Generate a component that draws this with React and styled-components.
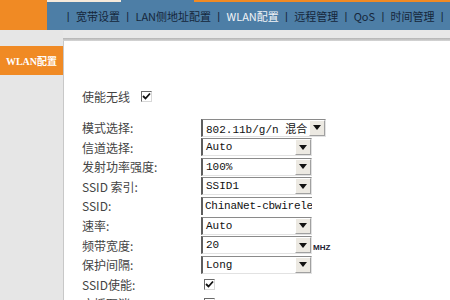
import React from 'react';
import styled, { createGlobalStyle } from 'styled-components';

const GlobalStyle = createGlobalStyle`
  html, body {
    margin: 0;
    padding: 0;
    background: #ffffff;
  }
  body {
    font-family: "Noto Sans CJK SC", "Liberation Sans", sans-serif;
  }
`;

const navItems = [
  { label: '宽带设置' },
  { label: 'LAN侧地址配置' },
  { label: 'WLAN配置', active: true },
  { label: '远程管理' },
  { label: 'QoS' },
  { label: '时间管理' },
];

const fields = [
  { label: '模式选择:', type: 'select', value: '802.11b/g/n 混合', wide: true },
  { label: '信道选择:', type: 'select', value: 'Auto' },
  { label: '发射功率强度:', type: 'select', value: '100%' },
  { label: 'SSID 索引:', type: 'select', value: 'SSID1' },
  { label: 'SSID:', type: 'text', value: 'ChinaNet-cbwireless' },
  { label: '速率:', type: 'select', value: 'Auto' },
  { label: '频带宽度:', type: 'select', value: '20', unit: 'MHZ' },
  { label: '保护间隔:', type: 'select', value: 'Long' },
  { label: 'SSID使能:', type: 'check', checked: true },
  { label: '广播取消:', type: 'check', checked: false },
];

function Check({ checked }) {
  return (
    <CheckBox>
      {checked && (
        <svg width="9" height="9" viewBox="0 0 9 9">
          <path d="M1 4 L3.5 6.5 L8 1.5" fill="none" stroke="#111" strokeWidth="1.8" />
        </svg>
      )}
    </CheckBox>
  );
}

function Select({ value, wide }) {
  return (
    <SelectBox wide={wide}>
      <SelectText>{value}</SelectText>
      <ArrowButton>
        <svg width="8" height="5" viewBox="0 0 8 5">
          <path d="M0 0 H8 L4 5 Z" fill="#111" />
        </svg>
      </ArrowButton>
    </SelectBox>
  );
}

export default function App() {
  return (
    <Page>
      <GlobalStyle />
      <Header>
        <Logo />
        <NavWrap>
          <NavStrip>
            <StripPart color="#f6eadb" width="74px" />
            <StripPart color="#4d7ea6" width="73px" />
            <StripPart color="#f08a24" />
          </NavStrip>
          <Nav>
            <Sep>|</Sep>
            {navItems.map((item) => (
              <React.Fragment key={item.label}>
                <NavItem active={item.active}>{item.label}</NavItem>
                <Sep>|</Sep>
              </React.Fragment>
            ))}
          </Nav>
        </NavWrap>
      </Header>
      <Body>
        <Sidebar>
          <SideTab>WLAN配置</SideTab>
        </Sidebar>
        <Main>
          <TopStrip />
          <Shadow />
          <Content>
            <EnableRow>
              <Label>使能无线</Label>
              <Check checked />
            </EnableRow>
            <Form>
              {fields.map((f) => (
                <React.Fragment key={f.label}>
                  <Label>{f.label}</Label>
                  <Control>
                    {f.type === 'select' && <Select value={f.value} wide={f.wide} />}
                    {f.type === 'text' && <TextInput>{f.value}</TextInput>}
                    {f.type === 'check' && <Check checked={f.checked} />}
                    {f.unit && <Unit>{f.unit}</Unit>}
                  </Control>
                </React.Fragment>
              ))}
            </Form>
          </Content>
        </Main>
      </Body>
    </Page>
  );
}

const Page = styled.div`
  width: 450px;
  height: 300px;
  overflow: hidden;
  display: flex;
  flex-direction: column;
  background: #e6e6e6;
`;

const Header = styled.div`
  display: flex;
  height: 30px;
  flex-shrink: 0;
`;

const Logo = styled.div`
  width: 63px;
  background: #f08a24;
`;

const NavWrap = styled.div`
  flex: 1;
  display: flex;
  flex-direction: column;
`;

const NavStrip = styled.div`
  display: flex;
  height: 2px;
`;

const StripPart = styled.div`
  background: ${(p) => p.color};
  width: ${(p) => p.width || 'auto'};
  flex: ${(p) => (p.width ? '0 0 auto' : '1')};
`;

const Nav = styled.div`
  flex: 1;
  display: flex;
  align-items: center;
  padding-left: 13px;
  background: #4d7ea6;
  font-size: 11px;
  color: #15263a;
  white-space: nowrap;
`;

const NavItem = styled.span`
  color: ${(p) => (p.active ? '#f2f4f7' : '#15263a')};
`;

const Sep = styled.span`
  margin: 0 6.3px;
  font-family: "Liberation Sans", sans-serif;
`;

const Body = styled.div`
  flex: 1;
  display: flex;
`;

const Sidebar = styled.div`
  width: 63px;
  flex-shrink: 0;
  padding-top: 16px;
  background: #e6e6e6;
`;

const SideTab = styled.div`
  height: 29px;
  display: flex;
  align-items: center;
  justify-content: center;
  background: #f08a24;
  color: #ffffff;
  font-size: 10px;
  font-weight: bold;
  font-family: "Liberation Serif", "Noto Sans CJK SC", serif;
`;

const Main = styled.div`
  flex: 1;
  display: flex;
  flex-direction: column;
`;

const TopStrip = styled.div`
  height: 8px;
  background: #e8e8e8;
`;

const Shadow = styled.div`
  height: 3px;
  background: linear-gradient(#b4b4b4, #d6d6d6);
`;

const Content = styled.div`
  flex: 1;
  background: #ffffff;
  border-left: 1px solid #c8c8c8;
  padding: 45px 0 0 18px;
`;

const EnableRow = styled.div`
  display: flex;
  align-items: center;
  gap: 8px;
  height: 20px;
`;

const Label = styled.span`
  font-size: 12px;
  color: #444444;
  white-space: nowrap;
`;

const Form = styled.div`
  margin-top: 12px;
  display: grid;
  grid-template-columns: 119px 1fr;
  grid-auto-rows: 19.55px;
  align-items: center;
`;

const Control = styled.div`
  display: flex;
  align-items: center;
`;

const SelectBox = styled.div`
  box-sizing: border-box;
  width: ${(p) => (p.wide ? '125px' : '111px')};
  height: 18px;
  display: flex;
  align-items: center;
  border-top: 1px solid #8a8a8a;
  border-left: 2px solid #5e5e5e;
  border-right: 1px solid #e2e2e2;
  border-bottom: 1px solid #e2e2e2;
  background: #ffffff;
`;

const SelectText = styled.span`
  flex: 1;
  padding-left: 3px;
  font-family: "Liberation Mono", "Noto Sans CJK SC", monospace;
  font-size: 11px;
  color: #111111;
  white-space: nowrap;
  overflow: hidden;
`;

const ArrowButton = styled.div`
  box-sizing: border-box;
  width: 16px;
  height: 16px;
  display: flex;
  align-items: center;
  justify-content: center;
  background: #ece9e2;
  border-top: 1px solid #ffffff;
  border-left: 1px solid #ffffff;
  border-right: 1px solid #a0a0a0;
  border-bottom: 1px solid #a0a0a0;
`;

const TextInput = styled.div`
  box-sizing: border-box;
  width: 111px;
  height: 18px;
  display: flex;
  align-items: center;
  padding-left: 2px;
  border-top: 1px solid #8a8a8a;
  border-left: 2px solid #5e5e5e;
  font-family: "Liberation Mono", monospace;
  font-size: 11px;
  letter-spacing: -0.25px;
  color: #111111;
  white-space: nowrap;
  overflow: hidden;
`;

const CheckBox = styled.div`
  box-sizing: border-box;
  width: 11px;
  height: 11px;
  display: flex;
  align-items: center;
  justify-content: center;
  margin-left: 3px;
  border-top: 1px solid #6a6a6a;
  border-left: 1px solid #6a6a6a;
  border-right: 1px solid #d8d8d8;
  border-bottom: 1px solid #d8d8d8;
  background: #ffffff;
`;

const Unit = styled.span`
  margin-left: 1px;
  font-family: "Liberation Sans", sans-serif;
  font-size: 8px;
  font-weight: bold;
  color: #222233;
  align-self: flex-end;
  margin-bottom: 2px;
`;
